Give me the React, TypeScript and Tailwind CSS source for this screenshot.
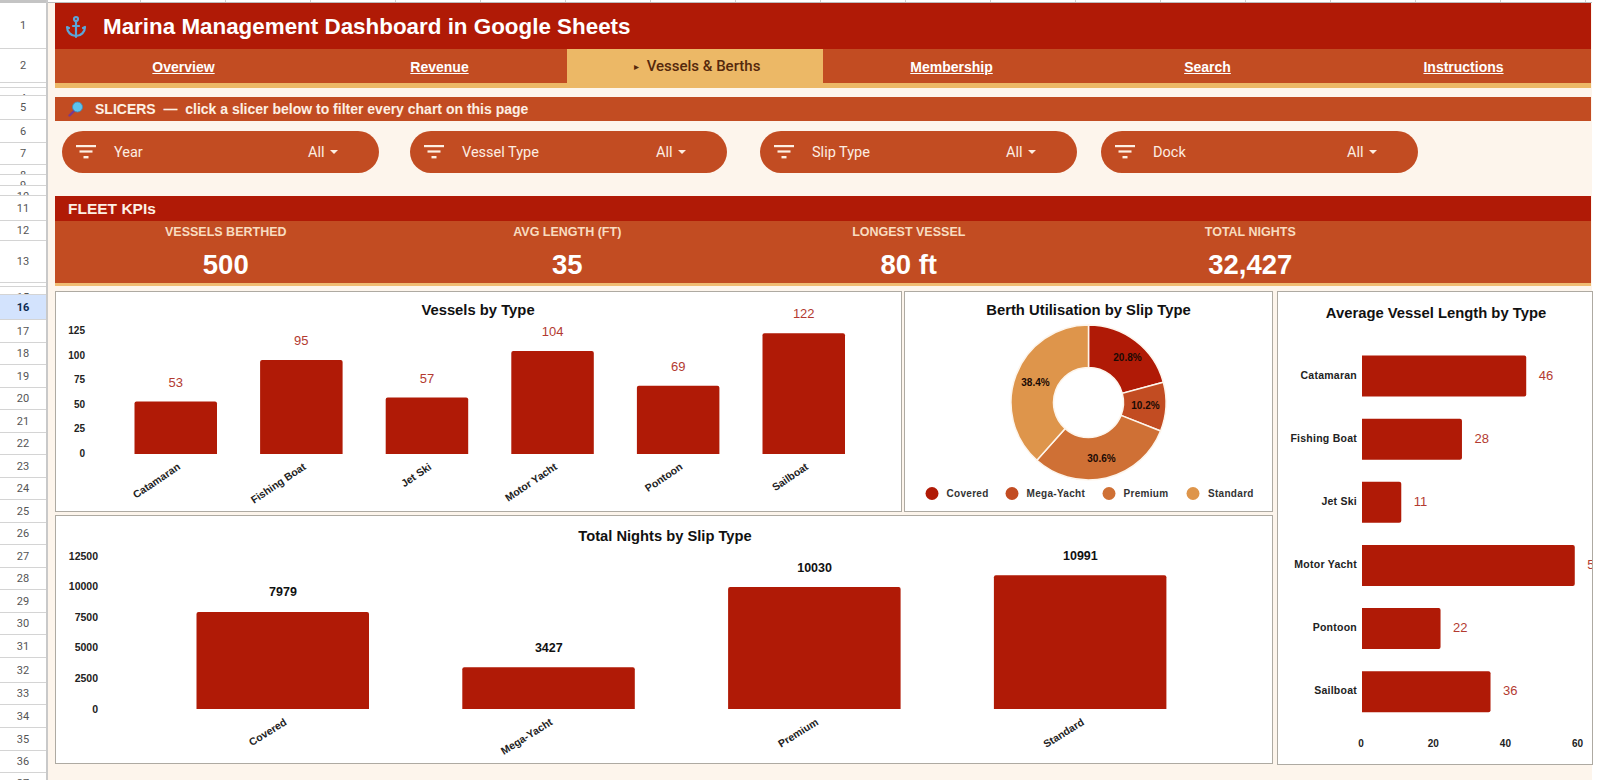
import React from 'react';
import { Anchor } from 'lucide-react';

const RED = '#b01a06';
const LABEL = '#b33a30';

const gutterRows: [number, number][] = [
  [1, 46], [2, 34], [3, 5], [4, 8], [5, 24], [6, 23], [7, 22], [8, 10], [9, 11], [10, 10],
  [11, 25], [12, 20], [13, 42], [14, 3], [15, 8], [16, 25], [17, 23], [18, 22], [19, 23], [20, 22],
  [21, 23], [22, 22], [23, 23], [24, 22], [25, 23], [26, 22], [27, 23], [28, 22], [29, 23], [30, 22],
  [31, 23], [32, 25], [33, 22], [34, 23], [35, 23], [36, 22], [37, 8],
];

const navItems = ['Overview', 'Revenue', 'Vessels & Berths', 'Membership', 'Search', 'Instructions'];
const slicers = [
  { name: 'Year', gap: 'mr-[31px]' },
  { name: 'Vessel Type', gap: 'mr-[33px]' },
  { name: 'Slip Type', gap: 'mr-[24px]' },
  { name: 'Dock', gap: '' },
];
const kpis = [
  ['VESSELS BERTHED', '500'],
  ['AVG LENGTH (FT)', '35'],
  ['LONGEST VESSEL', '80 ft'],
  ['TOTAL NIGHTS', '32,427'],
];

const vessels = [
  { name: 'Catamaran', count: 53, avg: 46 },
  { name: 'Fishing Boat', count: 95, avg: 28 },
  { name: 'Jet Ski', count: 57, avg: 11 },
  { name: 'Motor Yacht', count: 104, avg: 59.6 },
  { name: 'Pontoon', count: 69, avg: 22 },
  { name: 'Sailboat', count: 122, avg: 36 },
];
const slips = [
  { name: 'Covered', nights: 7979, pct: 20.8, color: '#b01a06', lx: 39, ly: -45, dot: 27, text: 41.5 },
  { name: 'Mega-Yacht', nights: 3427, pct: 10.2, color: '#c24c22', lx: 57, ly: 3, dot: 107, text: 121.5 },
  { name: 'Premium', nights: 10030, pct: 30.6, color: '#cf7035', lx: 13, ly: 56, dot: 204, text: 218.5 },
  { name: 'Standard', nights: 10991, pct: 38.4, color: '#de954b', lx: -53, ly: -20, dot: 288, text: 303 },
];

const FilterIcon = () => (
  <svg width="20" height="14" viewBox="0 0 20 14" fill="#fdf0e4">
    <rect x="0" y="0" width="20" height="2.2" />
    <rect x="3.5" y="5.4" width="13" height="2.2" />
    <rect x="7.5" y="11" width="5" height="2.4" />
  </svg>
);

const SearchGlyph = () => (
  <svg width="16" height="16" viewBox="0 0 16 16">
    <path d="M6 10 L1.5 14.5" stroke="#7a3a8c" strokeWidth="2.4" strokeLinecap="round" />
    <circle cx="9.5" cy="6" r="5" fill="#5cc4ee" stroke="#3a8fc0" strokeWidth="0.8" />
  </svg>
);

const Panel = ({ className, children }: { className: string; children: React.ReactNode }) => (
  <div className={`overflow-hidden border border-[#aeaaa2] bg-white ${className}`}>{children}</div>
);

const VesselsChart = () => {
  const base = 162;
  return (
    <svg width="845" height="219" className="block font-['Liberation_Sans',sans-serif]">
      <text x="422" y="23" textAnchor="middle" fontSize="14.8" fontWeight="700" fill="#111">Vessels by Type</text>
      {[125, 100, 75, 50, 25, 0].map((t, i) => (
        <text key={t} x="29" y={42 + i * 24.6} textAnchor="end" fontSize="10" fontWeight="700" fill="#222">{t}</text>
      ))}
      {vessels.map((v, i) => {
        const x = 78.5 + i * 125.6;
        const h = v.count * 0.99;
        return (
          <g key={v.name}>
            <path d={`M${x} ${base} V${base - h + 2} Q${x} ${base - h} ${x + 2} ${base - h} H${x + 80.5} Q${x + 82.5} ${base - h} ${x + 82.5} ${base - h + 2} V${base} Z`} fill={RED} />
            <text x={x + 41.25} y={base - h - 15} textAnchor="middle" fontSize="13" fill={LABEL}>{v.count}</text>
            <text transform={`translate(${x + 46.5} 176.5) rotate(-34)`} textAnchor="end" fontSize="10.5" fontWeight="700" fill="#222">{v.name}</text>
          </g>
        );
      })}
    </svg>
  );
};

const donutPath = (start: number, end: number, ro: number, ri: number) => {
  const p = (a: number, r: number) => {
    const rad = ((a - 90) * Math.PI) / 180;
    return `${(r * Math.cos(rad)).toFixed(2)} ${(r * Math.sin(rad)).toFixed(2)}`;
  };
  const large = end - start > 180 ? 1 : 0;
  return `M${p(start, ro)} A${ro} ${ro} 0 ${large} 1 ${p(end, ro)} L${p(end, ri)} A${ri} ${ri} 0 ${large} 0 ${p(start, ri)} Z`;
};

const UtilisationChart = () => {
  let angle = 0;
  return (
    <svg width="368" height="219" className="block font-['Liberation_Sans',sans-serif]">
      <text x="183.5" y="23" textAnchor="middle" fontSize="14.8" fontWeight="700" fill="#111">Berth Utilisation by Slip Type</text>
      <g transform="translate(183.5 110.5)">
        {slips.map((s) => {
          const start = angle;
          angle += s.pct * 3.6;
          return <path key={s.name} d={donutPath(start, angle, 77.5, 35)} fill={s.color} stroke="#fdf5ec" strokeWidth="1.5" />;
        })}
        {slips.map((s) => (
          <text key={s.name} x={s.lx} y={s.ly + 3.5} textAnchor="middle" fontSize="10" fontWeight="700" fill="#1a0a04">{s.pct}%</text>
        ))}
      </g>
      {slips.map((s) => (
        <g key={s.name}>
          <circle cx={s.dot} cy="201.5" r="6.5" fill={s.color} />
          <text x={s.text} y="205" fontSize="10" fontWeight="700" letterSpacing="0.3" fill="#333">{s.name}</text>
        </g>
      ))}
    </svg>
  );
};

const NightsChart = () => {
  const base = 193;
  return (
    <svg width="1216" height="247" className="block font-['Liberation_Sans',sans-serif]">
      <text x="609" y="25" textAnchor="middle" fontSize="14.7" fontWeight="700" fill="#111">Total Nights by Slip Type</text>
      {[12500, 10000, 7500, 5000, 2500, 0].map((t, i) => (
        <text key={t} x="42" y={43.5 + i * 30.6} textAnchor="end" fontSize="10.5" fontWeight="700" fill="#222">{t}</text>
      ))}
      {slips.map((s, i) => {
        const x = 140.5 + i * 265.8;
        const h = s.nights * 0.01216;
        return (
          <g key={s.name}>
            <path d={`M${x} ${base} V${base - h + 2} Q${x} ${base - h} ${x + 2} ${base - h} H${x + 170.5} Q${x + 172.5} ${base - h} ${x + 172.5} ${base - h + 2} V${base} Z`} fill={RED} />
            <text x={x + 86.5} y={base - h - 15.5} textAnchor="middle" fontSize="12.5" fontWeight="700" fill="#111">{s.nights}</text>
            <text transform={`translate(${x + 91} 208) rotate(-32)`} textAnchor="end" fontSize="10.5" fontWeight="700" fill="#222">{s.name}</text>
          </g>
        );
      })}
    </svg>
  );
};

const AvgLengthChart = () => (
  <svg width="314" height="473" className="block font-['Liberation_Sans',sans-serif]">
    <text x="158" y="26" textAnchor="middle" fontSize="14.8" fontWeight="700" fill="#111">Average Vessel Length by Type</text>
    {vessels.map((v, i) => {
      const y = 63.5 + i * 63.15;
      const w = v.avg * 3.57;
      return (
        <g key={v.name}>
          <path d={`M84 ${y} H${84 + w - 2} Q${84 + w} ${y} ${84 + w} ${y + 2} V${y + 39} Q${84 + w} ${y + 41} ${84 + w - 2} ${y + 41} H84 Z`} fill={RED} />
          <text x="79" y={y + 23} textAnchor="end" fontSize="10.5" fontWeight="700" letterSpacing="0.25" fill="#222">{v.name}</text>
          <text x={84 + w + 12.5} y={y + 24} fontSize="13" fill={LABEL}>{Math.floor(v.avg)}</text>
        </g>
      );
    })}
    {[0, 20, 40, 60].map((t, i) => (
      <text key={t} x={83 + i * 72.2} y="454.5" textAnchor="middle" fontSize="10" fontWeight="700" fill="#222">{t}</text>
    ))}
  </svg>
);

export default function App() {
  return (
    <div className="flex h-[780px] w-[1600px] overflow-hidden bg-white font-['Liberation_Sans',sans-serif]">
      <div className="w-[48px] shrink-0 border-r-2 border-[#c9c9c9] bg-white font-['Roboto',sans-serif] text-[11px] text-[#555]">
        <div className="h-[3px] bg-[#c4c4c4]" />
        {gutterRows.map(([n, h]) => (
          <div
            key={n}
            style={{ height: h }}
            className={`flex justify-center overflow-hidden border-b border-[#d4d4d4] ${h < 12 ? 'items-start pt-[3px]' : 'items-center pt-[2px]'} ${n === 16 ? 'bg-[#d3e3fd] font-bold text-[#0b2a52]' : ''}`}
          >
            {n === 3 || n === 14 ? null : n}
          </div>
        ))}
      </div>

      <div className="flex w-[1544px] shrink-0 flex-col bg-[#fdf5ec]">
        <div className="flex h-[3px] border-b border-[#bdbdbd] bg-white pl-[8px]">
          {Array.from({ length: 18 }, (_, i) => (
            <div key={i} className="w-[85px] shrink-0 border-r border-[#cfcfcf]" />
          ))}
        </div>
        <div className="ml-[7px] w-[1536px]">
          <div className="flex h-[46px] items-center bg-[#b01a06] pl-[9px] pt-[2px] text-white">
            <Anchor size={24} strokeWidth={2.2} className="text-[#5ba6da]" />
            <span className="ml-[15px] text-[22.4px] font-bold">Marina Management Dashboard in Google Sheets</span>
          </div>
          <div className="grid h-[34px] grid-cols-6 bg-[#c24c22] text-[14px] font-bold text-white">
            {navItems.map((item) =>
              item === 'Vessels & Berths' ? (
                <div key={item} className="flex h-[39px] items-center justify-center gap-[8px] bg-[#ecb866] pb-[4px] pl-[4px] font-['Roboto',sans-serif] text-[15px] font-medium text-[#55280c]">
                  <span className="text-[10px]">▸</span>
                  {item}
                </div>
              ) : (
                <div key={item} className="flex items-center justify-center pb-[2px] pl-[1px] underline">{item}</div>
              ),
            )}
          </div>
          <div className="h-[5px] bg-[#ecb866]" />

          <div className="mt-[9px] flex h-[24px] items-center bg-[#c24c22] pl-[13px] text-[14px] font-bold text-[#fdf0e4]">
            <SearchGlyph />
            <span className="ml-[11px] whitespace-pre">SLICERS  —  click a slicer below to filter every chart on this page</span>
          </div>
          <div className="flex pl-[7px] pt-[10px]">
            {slicers.map((s) => (
              <div key={s.name} className={`flex h-[42px] w-[317px] items-center rounded-full bg-[#c24c22] pl-[14px] font-['Roboto',sans-serif] text-[14.5px] text-[#fdeee2] ${s.gap}`}>
                <FilterIcon />
                <span className="ml-[18px] w-[194px] pt-[2px]">{s.name}</span>
                <span className="pt-[2px]">All</span>
                <span className="ml-[5px] h-0 w-0 border-x-[4px] border-t-[4px] border-x-transparent border-t-[#fdeee2]" />
              </div>
            ))}
          </div>

          <div className="mt-[23px] flex h-[25px] items-center bg-[#b01a06] pl-[13px] text-[15.5px] font-bold text-[#fdf0e4]">FLEET KPIs</div>
          <div className="grid h-[62px] grid-cols-[repeat(4,341.5px)] bg-[#c24c22] text-center">
            {kpis.map(([label, value]) => (
              <div key={label} className="flex flex-col items-center">
                <span className="mt-[4px] text-[12.5px] font-bold leading-[15px] text-[#f8dcc0]">{label}</span>
                <span className="mt-[9px] text-[27.5px] font-bold leading-[31px] text-white">{value}</span>
              </div>
            ))}
          </div>
          <div className="h-[3px] bg-[#f0bc72]" />

          <div className="mt-[5px] flex w-[1538px] gap-[4px]">
            <div className="flex w-[1218px] flex-col gap-[3px]">
              <div className="flex gap-[2px]">
                <Panel className="h-[221px] w-[847px]"><VesselsChart /></Panel>
                <Panel className="h-[221px] w-[369px]"><UtilisationChart /></Panel>
              </div>
              <Panel className="h-[249px]"><NightsChart /></Panel>
            </div>
            <Panel className="h-[474px] w-[316px]"><AvgLengthChart /></Panel>
          </div>
        </div>
      </div>
    </div>
  );
}
